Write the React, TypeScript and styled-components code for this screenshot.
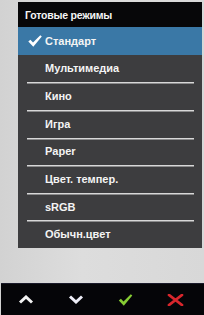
import React from 'react';
import styled, { createGlobalStyle } from 'styled-components';

const GlobalStyle = createGlobalStyle`
  html, body {
    margin: 0;
    padding: 0;
    background: #d9d9d9;
  }
`;

const MODES = [
  'Стандарт',
  'Мультимедиа',
  'Кино',
  'Игра',
  'Paper',
  'Цвет. темпер.',
  'sRGB',
  'Обычн.цвет',
];

const Screen = styled.div`
  width: 204px;
  height: 315px;
  display: flex;
  flex-direction: column;
  background: linear-gradient(90deg, #d2d2d2 0%, #dddddd 40%, #d8d8d8 100%);
  font-family: 'Liberation Sans', Arial, sans-serif;
  font-weight: bold;
  color: #f4f4f4;
  overflow: hidden;
`;

const Panel = styled.div`
  margin: 2px 2px 0 18px;
  background: #3d3d3f;
  display: flex;
  flex-direction: column;
`;

const Header = styled.div`
  height: 25px;
  display: flex;
  align-items: center;
  padding-left: 7px;
  background: #070709;
  font-size: 10.5px;
  letter-spacing: -0.2px;
`;

const List = styled.div`
  height: 221px;
  display: grid;
  grid-template-rows: repeat(8, 1fr);
`;

const Row = styled.div<{ $active?: boolean; $divided?: boolean }>`
  display: flex;
  align-items: center;
  padding-left: 10px;
  font-size: 11px;
  background-color: ${(p) => (p.$active ? '#3a78a6' : 'transparent')};
  background-image: ${(p) =>
    p.$divided ? 'linear-gradient(#d8d8d8, #d8d8d8)' : 'none'};
  background-repeat: no-repeat;
  background-position: 9px 0;
  background-size: calc(100% - 17px) 1.5px;
`;

const Mark = styled.span`
  width: 17px;
  display: flex;
  align-items: center;
`;

const Label = styled.span`
  padding-left: 0;
`;

const BottomBar = styled.div`
  margin: auto 0 0 1px;
  height: 31px;
  background: #050508;
  border-top: 1px solid #1a1a2a;
  display: grid;
  grid-template-columns: repeat(4, 1fr);
  padding-right: 4px;
`;

const Key = styled.div`
  display: flex;
  align-items: center;
  justify-content: center;
`;

function Check({ color, w, h }: { color: string; w: number; h: number }) {
  return (
    <svg width={w} height={h} viewBox="0 0 14 12">
      <path
        d="M0.3 6.6 L2.4 4.7 L5 7.6 L12.3 0.3 L13.8 1.6 L5.3 11.8 Z"
        fill={color}
      />
    </svg>
  );
}

function Chevron({ up }: { up?: boolean }) {
  return (
    <svg width="16" height="9" viewBox="0 0 16 9">
      <path
        d={up ? 'M2 7.5 L8 2 L14 7.5' : 'M2 1.5 L8 7 L14 1.5'}
        fill="none"
        stroke={up ? '#f2f2f2' : '#eeeef8'}
        strokeWidth="3"
      />
    </svg>
  );
}

function Cross() {
  return (
    <svg width="17" height="12" viewBox="0 0 17 12">
      <path
        d="M2 1 L15 11 M15 1 L2 11"
        stroke="#d8262c"
        strokeWidth="2.8"
        strokeLinecap="round"
      />
    </svg>
  );
}

export default function App() {
  return (
    <Screen>
      <GlobalStyle />
      <Panel>
        <Header>Готовые режимы</Header>
        <List>
          {MODES.map((mode, i) => (
            <Row key={mode} $active={i === 0} $divided={i > 1}>
              <Mark>{i === 0 && <Check color="#ffffff" w={14} h={12} />}</Mark>
              <Label>{mode}</Label>
            </Row>
          ))}
        </List>
      </Panel>
      <BottomBar>
        <Key>
          <Chevron up />
        </Key>
        <Key>
          <Chevron />
        </Key>
        <Key>
          <Check color="#86cc34" w={15} h={12} />
        </Key>
        <Key>
          <Cross />
        </Key>
      </BottomBar>
    </Screen>
  );
}
